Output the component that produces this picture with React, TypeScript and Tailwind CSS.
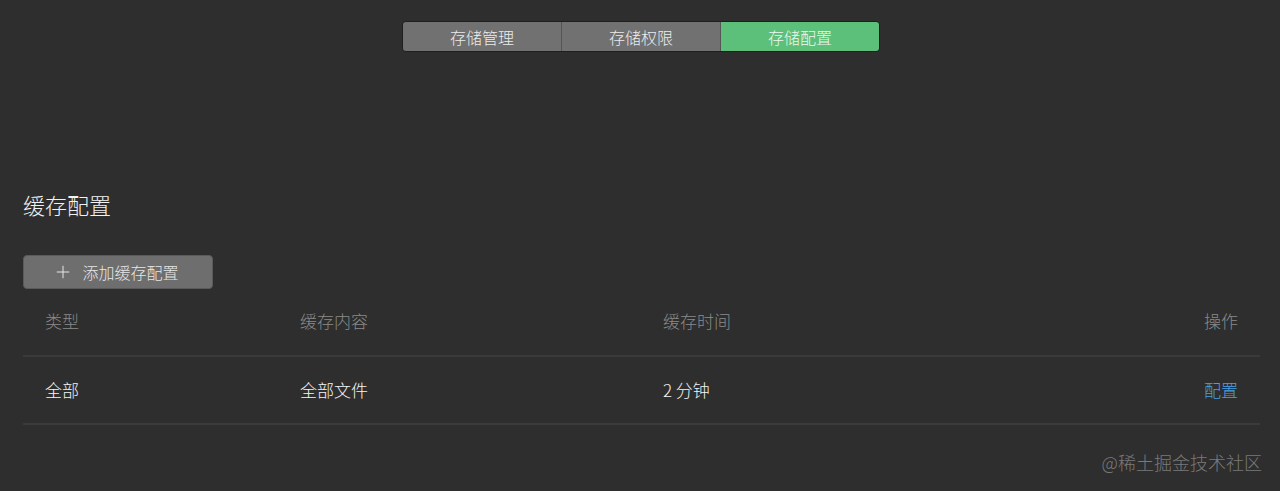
import { Plus } from 'lucide-react';

const tabs = ['存储管理', '存储权限', '存储配置'];

const rows = [{ type: '全部', content: '全部文件', time: '2 分钟' }];

export default function App() {
  const active = 2;

  return (
    <div
      className="relative h-[491px] w-[1280px] overflow-hidden bg-[#2e2e2e] text-white"
      style={{ fontFamily: '"Noto Sans CJK SC", "Noto Sans", sans-serif' }}
    >
      {/* Segmented tabs */}
      <div className="flex justify-center pl-[2px] pt-[21px]">
        <div className="flex h-[31px] w-[478px] overflow-hidden rounded-[4px] border border-[#1f1f1f]">
          {tabs.map((t, i) => (
            <div
              key={t}
              className={`flex flex-1 items-center justify-center text-[16px] font-light ${
                i === active
                  ? 'bg-[#5cbf7a] text-[#eef7ef]'
                  : 'bg-[#717171] text-[#ececec]'
              } ${i > 0 ? 'border-l border-[#555]' : ''}`}
            >
              {t}
            </div>
          ))}
        </div>
      </div>

      {/* Section */}
      <div className="px-[23px] pt-[135px]">
        <h2 className="text-[22px] font-light leading-[34px] text-[#f2f2f2]">缓存配置</h2>

        <button className="mt-[34px] flex h-[34px] w-[190px] items-center justify-center gap-[9px] rounded-[4px] border border-[#5a5a5a] bg-[#6e6e6e] pr-[4px] text-[16px] font-light text-[#e6e6e6]">
          <Plus className="h-[20px] w-[20px]" strokeWidth={1.2} />
          添加缓存配置
        </button>

        {/* Table */}
        <div className="mr-[-3px] text-[17px] font-light">
          <div className="grid h-[68px] grid-cols-[255px_363px_1fr_auto] items-center border-b-2 border-[#3a3a3a] px-[22px] pb-[2px] text-[#8a8a8a]">
            <span>类型</span>
            <span>缓存内容</span>
            <span>缓存时间</span>
            <span>操作</span>
          </div>
          {rows.map((r) => (
            <div
              key={r.type}
              className="grid h-[68px] grid-cols-[255px_363px_1fr_auto] items-center border-b-2 border-[#3a3a3a] px-[22px] text-[#f4f4f4]"
            >
              <span>{r.type}</span>
              <span>{r.content}</span>
              <span>{r.time}</span>
              <span className="text-[#4a9fe3]">配置</span>
            </div>
          ))}
        </div>
      </div>

      {/* Watermark */}
      <div className="absolute bottom-[15px] right-[18px] text-[18px] font-light text-[#7a7a7a]">@稀土掘金技术社区</div>
    </div>
  );
}
